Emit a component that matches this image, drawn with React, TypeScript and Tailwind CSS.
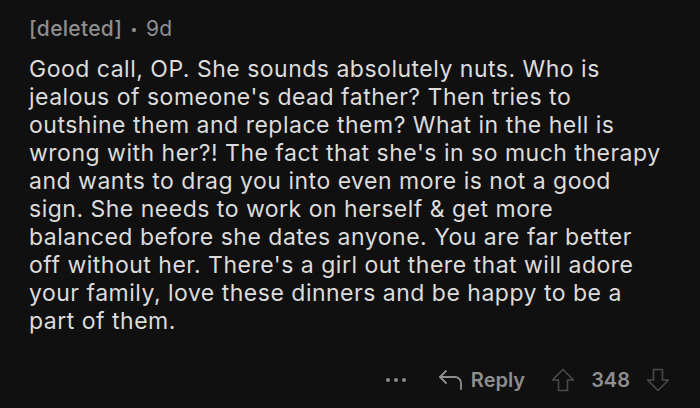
import React from "react";

const lines = [
  "Good call, OP. She sounds absolutely nuts. Who is",
  "jealous of someone's dead father? Then tries to",
  "outshine them and replace them? What in the hell is",
  "wrong with her?! The fact that she's in so much therapy",
  "and wants to drag you into even more is not a good",
  "sign. She needs to work on herself & get more",
  "balanced before she dates anyone. You are far better",
  "off without her. There's a girl out there that will adore",
  "your family, love these dinners and be happy to be a",
  "part of them.",
];

export default function App() {
  return (
    <div
      className="w-[700px] h-[408px] bg-[#101010] overflow-hidden relative"
      style={{ fontFamily: "Inter, 'Noto Sans', sans-serif" }}
    >
      <div className="pl-[29px] pt-[17px]">
        <div className="flex items-center text-[21px] leading-[24px] text-[#8e8e8e] tracking-[0.3px]">
          <span className="font-medium">[deleted]</span>
          <span className="mx-[8px] text-[13px]">•</span>
          <span>9d</span>
        </div>
        <div className="mt-[14px] text-[23px] leading-[28px] text-[#dcdcdc] tracking-[0.5px]">
          {lines.map((l, i) => (
            <div key={i} className="whitespace-nowrap">
              {l}
            </div>
          ))}
        </div>
      </div>
      <div className="absolute right-0 top-[366px] flex items-center h-[28px] text-[#8e8e8e]">
        <div className="flex gap-[4px] mr-[32px]">
          <span className="w-[4px] h-[4px] rounded-full bg-[#8e8e8e]" />
          <span className="w-[4px] h-[4px] rounded-full bg-[#8e8e8e]" />
          <span className="w-[4px] h-[4px] rounded-full bg-[#8e8e8e]" />
        </div>
        <svg width="26" height="22" viewBox="0 0 26 22" fill="none" stroke="#8e8e8e" strokeWidth="1.8" strokeLinecap="round" strokeLinejoin="round">
          <path d="M8 2 L2 8 L8 14" />
          <path d="M2 8 H17 A6 6 0 0 1 23 14 V20" />
        </svg>
        <span className="ml-[7px] text-[20px] font-semibold">Reply</span>
        <svg className="ml-[26px]" width="24" height="24" viewBox="0 0 24 24" fill="none" stroke="#4a4a4a" strokeWidth="1.6" strokeLinejoin="round">
          <path d="M12 1.5 L22.5 12 H16.5 V22.5 H7.5 V12 H1.5 Z" />
        </svg>
        <span className="ml-[16px] text-[20px] font-semibold">348</span>
        <svg className="ml-[16px] mr-[30px]" width="24" height="24" viewBox="0 0 24 24" fill="none" stroke="#4a4a4a" strokeWidth="1.6" strokeLinejoin="round">
          <path d="M12 22.5 L22.5 12 H16.5 V1.5 H7.5 V12 H1.5 Z" />
        </svg>
      </div>
    </div>
  );
}
